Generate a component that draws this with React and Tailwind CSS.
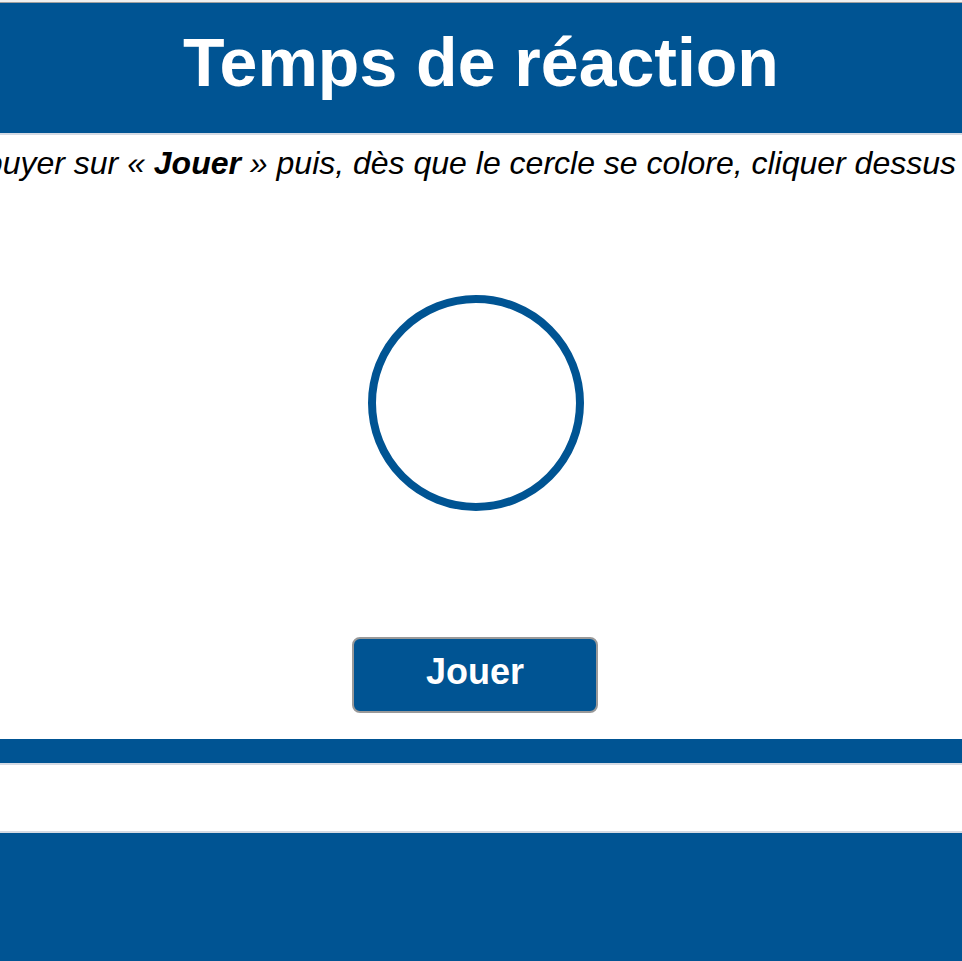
export default function App() {
  return (
    <div className="flex min-h-screen flex-col overflow-hidden bg-white font-['Liberation_Sans',Arial,sans-serif] text-black">
      <header className="border-b-2 border-[#d5dae3] bg-[#005493]">
        <div className="h-[3px] border-b border-[#a0a0a0] bg-[#f0f0f0]" />
        <h1 className="h-[130px] pt-5 text-center text-[68px] leading-[78px] font-bold text-white">
          Temps de réaction
        </h1>
      </header>
      <main className="flex flex-col items-center">
        <p className="flex w-full justify-end overflow-hidden pt-2 pr-1.5 text-[32px] leading-10 whitespace-nowrap italic">
          <span>
            Appuyer sur « <strong className="font-bold">Jouer</strong> » puis, dès que le cercle se colore, cliquer dessus
          </span>
        </p>
        <div className="flex w-full justify-center pt-28 pr-2.5">
          <button
            type="button"
            aria-label="Cercle"
            className="size-[216px] rounded-full border-8 border-[#005493] bg-white"
          />
        </div>
        <div className="flex w-full justify-center pt-[126px] pr-3 pb-[26px]">
          <button
            type="button"
            className="h-[76px] w-[246px] rounded-lg border-2 border-[#999999] bg-[#005493] pb-1.5 text-4xl font-bold text-white"
          >
            Jouer
          </button>
        </div>
      </main>
      <div className="h-6 bg-[#005493]" />
      <div className="h-[70px] border-y-2 border-[#d5dae3] bg-white" />
      <footer className="grow bg-[#005493]" />
    </div>
  );
}
